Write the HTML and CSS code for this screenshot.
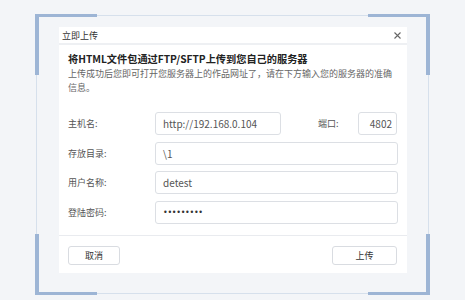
FILE: index.html
```html
<!DOCTYPE html>
<html lang="zh-CN">
<head>
    <meta charset="UTF-8">
    <meta name="viewport" content="width=device-width, initial-scale=1.0">
    <title>立即上传</title>
    <link rel="stylesheet" href="styles.css">
</head>
<body>
    <div class="stage">
        <div class="frame">
            <span class="corner tl"></span>
            <span class="corner tr"></span>
            <span class="corner bl"></span>
            <span class="corner br"></span>

            <!-- upload dialog -->
            <div class="dialog">
                <div class="dialog-title">
                    <span>立即上传</span>
                    <svg class="close" width="7" height="7" viewBox="0 0 7 7">
                        <path d="M0.5 0.5 L6.5 6.5 M6.5 0.5 L0.5 6.5" stroke="#666" stroke-width="1.1" fill="none"/>
                    </svg>
                </div>
                <div class="dialog-body">
                    <h1 class="heading">将HTML文件包通过FTP/SFTP上传到您自己的服务器</h1>
                    <p class="desc">上传成功后您即可打开您服务器上的作品网址了，请在下方输入您的服务器的准确信息。</p>

                    <div class="form">
                        <div class="row">
                            <label class="label">主机名:</label>
                            <div class="input host">http://192.168.0.104</div>
                            <label class="label port-label">端口:</label>
                            <div class="input port">4802</div>
                        </div>
                        <div class="row">
                            <label class="label">存放目录:</label>
                            <div class="input wide">\1</div>
                        </div>
                        <div class="row">
                            <label class="label">用户名称:</label>
                            <div class="input wide">detest</div>
                        </div>
                        <div class="row">
                            <label class="label">登陆密码:</label>
                            <div class="input wide dots">•••••••••</div>
                        </div>
                    </div>
                </div>
                <div class="dialog-footer">
                    <button class="btn cancel">取消</button>
                    <button class="btn upload">上传</button>
                </div>
            </div>
        </div>
    </div>
</body>
</html>
```

FILE: styles.css
```css
body {
    margin: 0;
    padding: 0;
    background-color: #f3f5f8;
    font-family: "Noto Sans CJK SC", "Noto Sans", sans-serif;
    color: #555;
}

.stage {
    padding: 15px 36px 17px 36px;
    height: 268px;
}

.frame {
    position: relative;
    border: 1px solid #d6e0ec;
    height: 266px;
    padding: 11px 21px 0 22px;
}

.corner {
    position: absolute;
    width: 58px;
    height: 58px;
    border-color: #9db5d5;
    border-style: solid;
    border-width: 0;
}

.corner.tl {
    left: -2px;
    top: -2px;
    border-left-width: 4px;
    border-top-width: 3px;
}

.corner.tr {
    right: -2px;
    top: -2px;
    border-right-width: 4px;
    border-top-width: 3px;
}

.corner.bl {
    left: -2px;
    bottom: -2px;
    border-left-width: 4px;
    border-bottom-width: 3px;
}

.corner.br {
    right: -2px;
    bottom: -2px;
    border-right-width: 4px;
    border-bottom-width: 3px;
}

.dialog {
    position: relative;
    width: 348px;
    height: 246px;
    background-color: white;
}

.dialog-title {
    height: 16px;
    display: flex;
    align-items: center;
    justify-content: space-between;
    padding: 0 6px 0 3px;
    font-size: 9px;
    color: #333;
    border-bottom: 2px solid #eef0f3;
}

.close {
    display: block;
}

.dialog-body {
    padding: 6px 9px 0 9px;
}

.heading {
    margin: 0;
    font-size: 10.2px;
    line-height: 16px;
    font-weight: bold;
    color: #222;
}

.desc {
    margin: 0;
    font-size: 9px;
    line-height: 14px;
    color: #666;
}

.form {
    margin-top: 17px;
    display: flex;
    flex-direction: column;
    gap: 6.5px;
}

.row {
    display: flex;
    align-items: center;
}

.label {
    width: 87px;
    font-size: 9px;
    color: #555;
}

.input {
    box-sizing: border-box;
    height: 23px;
    border: 1px solid #dcdfe4;
    border-radius: 3px;
    padding: 0 7px;
    font-size: 10px;
    line-height: 21px;
    color: #555;
    white-space: nowrap;
    overflow: hidden;
}

.host {
    width: 126px;
}

.port-label {
    width: 40px;
    margin-left: 37px;
}

.port {
    width: 39px;
    padding: 0 4px;
    text-align: right;
}

.wide {
    width: 243px;
}

.dots {
    font-family: "DejaVu Sans", sans-serif;
    font-size: 8px;
    letter-spacing: -0.3px;
    color: #333;
}

.dialog-footer {
    position: absolute;
    left: 0;
    right: 0;
    bottom: 0;
    height: 38px;
    border-top: 1px solid #e9ebef;
    display: flex;
    justify-content: space-between;
    align-items: flex-start;
    padding: 10px 10px 0 9px;
    box-sizing: border-box;
}

.btn {
    height: 19px;
    background-color: white;
    border: 1px solid #d9dce1;
    border-radius: 3px;
    font-family: "Noto Sans CJK SC", sans-serif;
    font-size: 9px;
    color: #333;
    padding: 0;
}

.cancel {
    width: 52px;
}

.upload {
    width: 65px;
}
```
